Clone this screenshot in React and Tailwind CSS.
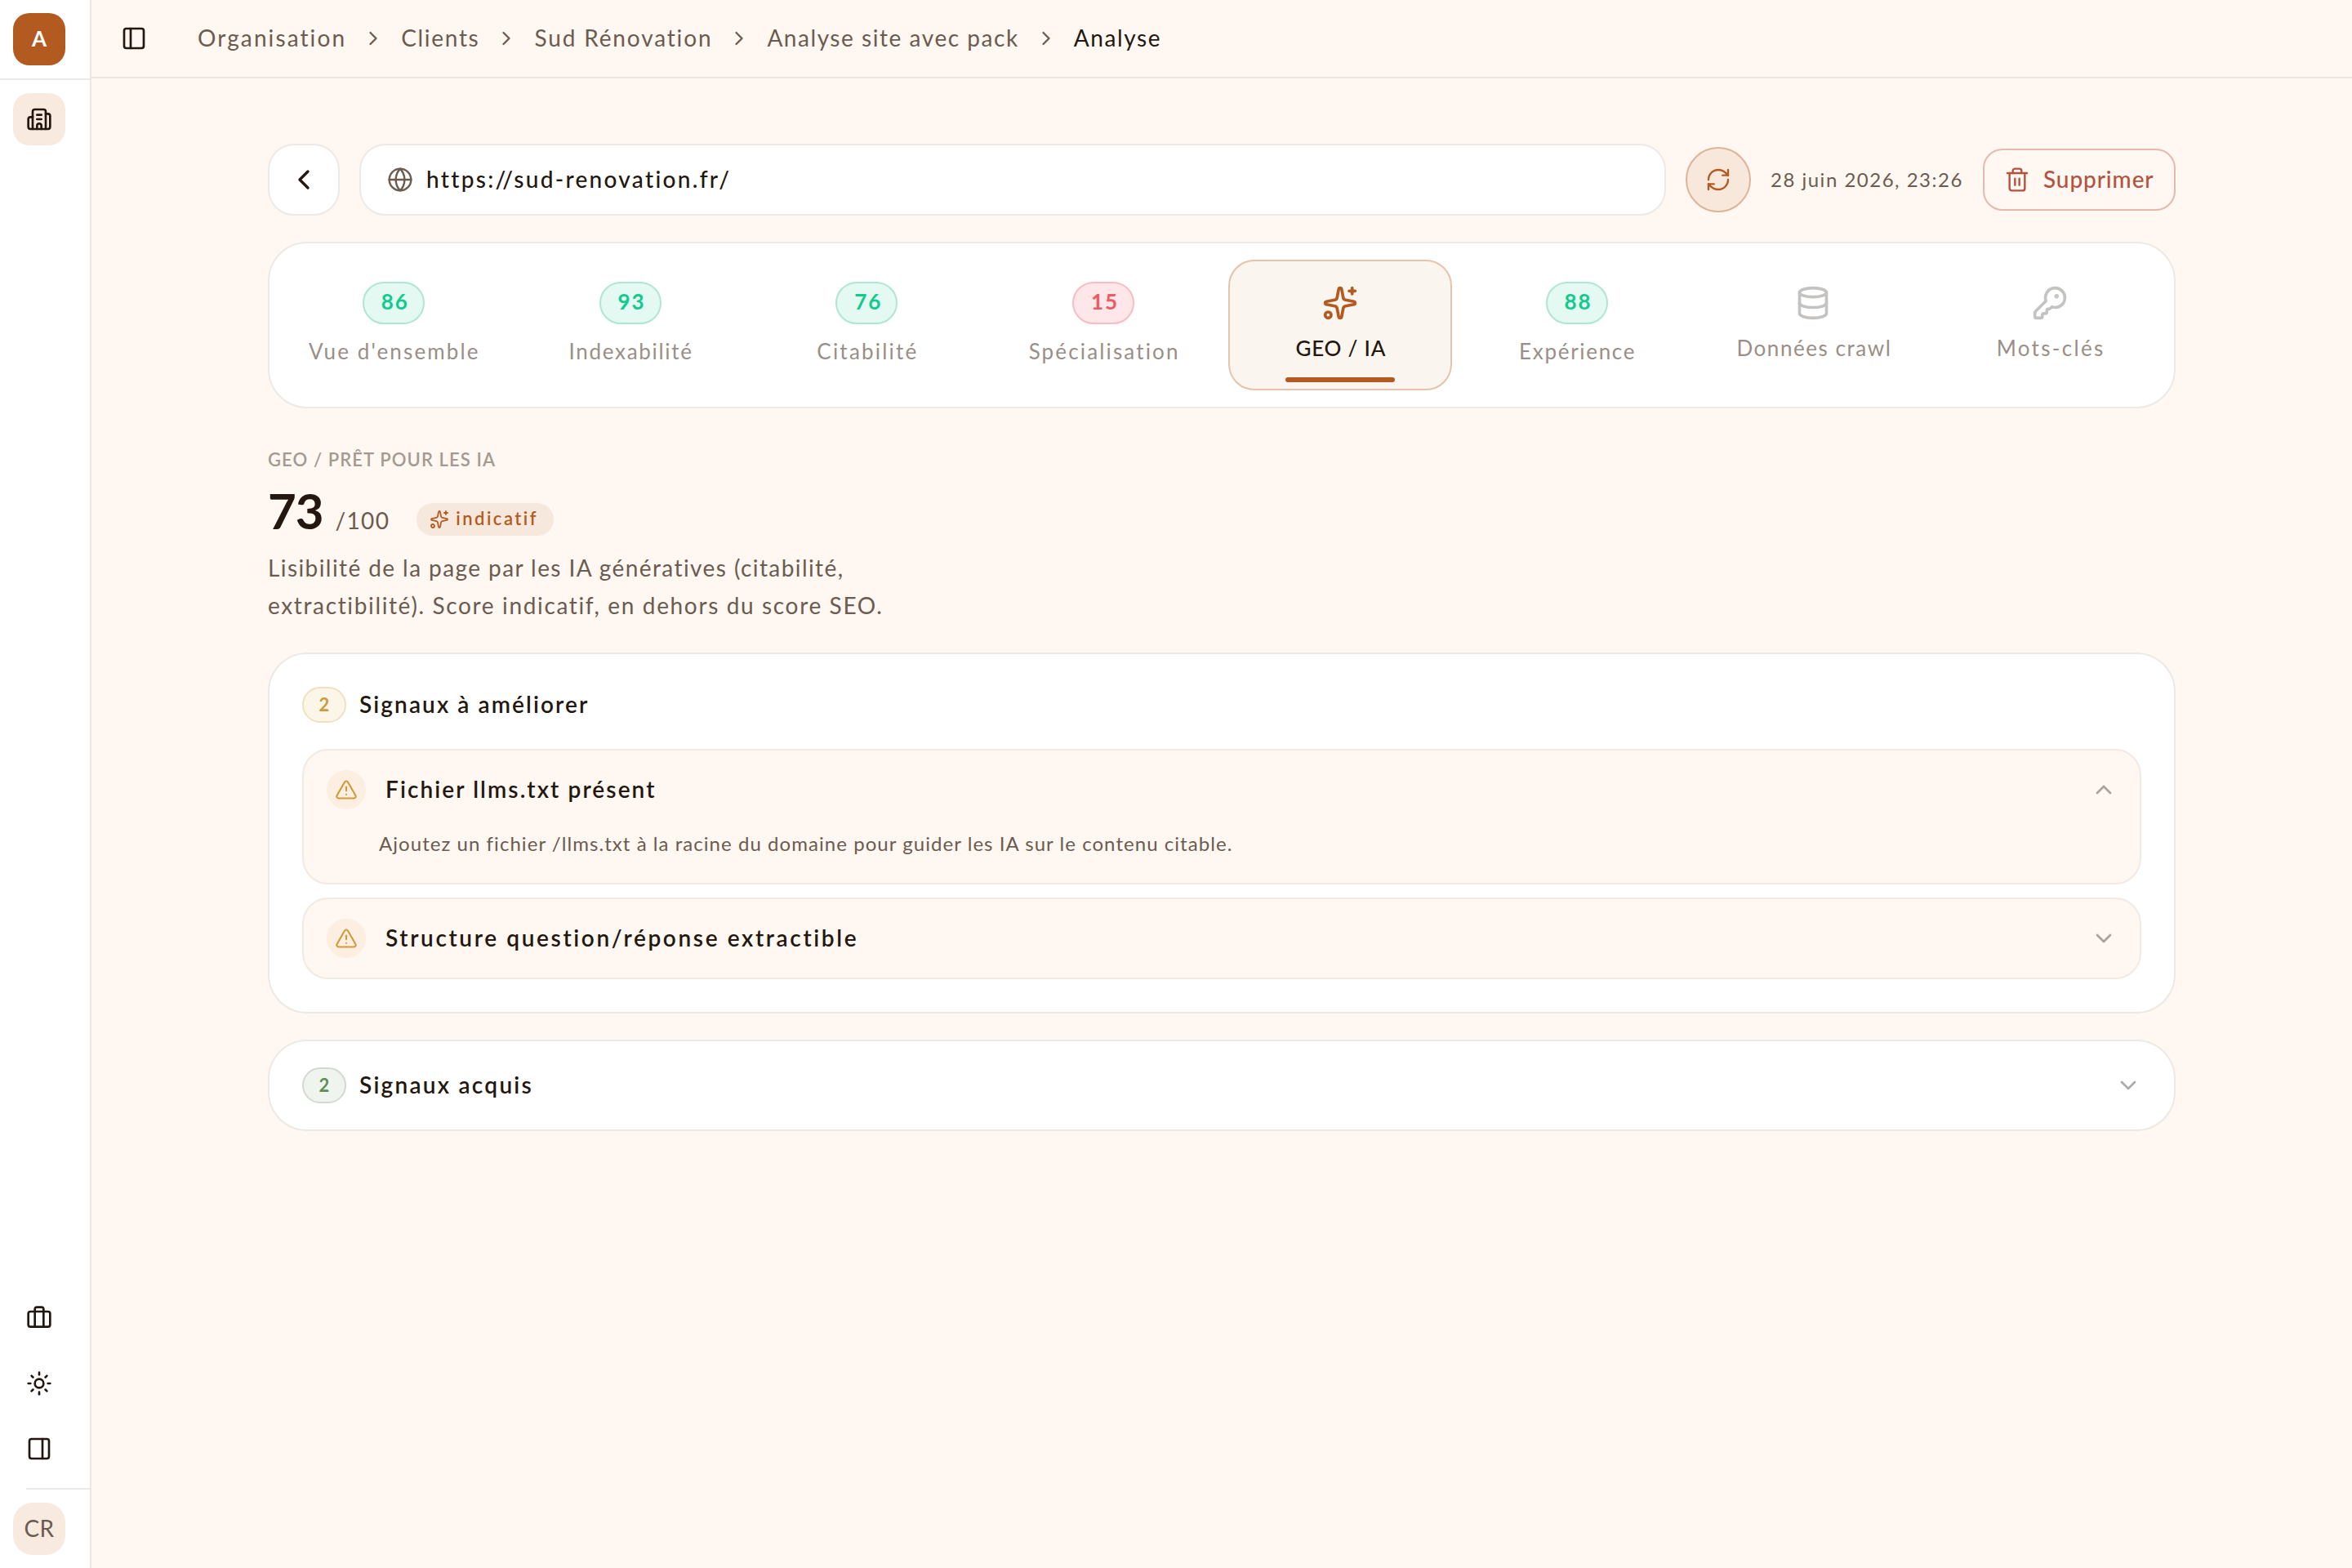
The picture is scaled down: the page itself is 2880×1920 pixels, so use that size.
import React from 'react'
import {
  AlertTriangle,
  Briefcase,
  Building2,
  ChevronDown,
  ChevronLeft,
  ChevronRight,
  ChevronUp,
  Database,
  Globe,
  KeyRound,
  PanelLeft,
  PanelRight,
  RefreshCw,
  Sparkles,
  Sun,
  Trash2,
} from 'lucide-react'

const crumbs = [
  { label: 'Organisation', cls: 'tracking-[2.1px]' },
  { label: 'Clients', cls: 'tracking-[1.7px]' },
  { label: 'Sud Rénovation', cls: 'tracking-[1.85px]' },
  { label: 'Analyse site avec pack', cls: 'tracking-[1.55px]' },
]

const good = 'bg-[#e3f9f1] border-[#b0e6d3] text-[#12c98e]'
const bad = 'bg-[#ffe6e9] border-[#f9bcc5] text-[#ee5a63]'

const tabs = [
  { label: "Vue d'ensemble", score: 86, tone: good, cls: 'tracking-[2.15px]' },
  { label: 'Indexabilité', score: 93, tone: good, cls: 'tracking-[1.7px]' },
  { label: 'Citabilité', score: 76, tone: good, cls: 'tracking-[2.2px]' },
  { label: 'Spécialisation', score: 15, tone: bad, cls: 'tracking-[2.15px]' },
  { label: 'GEO / IA', icon: Sparkles, active: true, cls: 'tracking-[0.8px]' },
  { label: 'Expérience', score: 88, tone: good, cls: 'tracking-[1.7px]' },
  { label: 'Données crawl', icon: Database, cls: 'tracking-[1.55px]' },
  { label: 'Mots-clés', icon: KeyRound, cls: 'tracking-[2.3px]' },
]

const Sidebar = () => (
  <aside className="w-[112px] shrink-0 flex flex-col bg-white border-r-2 border-[#eee7e1]">
    <div className="h-[98px] shrink-0 pl-4 flex items-center border-b-2 border-[#ebe9e7]">
      <div className="size-16 rounded-[20px] bg-[#b35a20] text-white text-[26px] font-bold flex items-center justify-center pb-[2px]">A</div>
    </div>
    <div className="pl-4 pt-4">
      <button className="size-16 rounded-[20px] bg-[#f9eadf] text-[#231710] flex items-center justify-center">
        <Building2 size={32} />
      </button>
    </div>
    <div className="mt-auto pl-4 flex flex-col gap-4 text-[#231710]">
      <button className="size-16 flex items-center justify-center"><Briefcase size={32} /></button>
      <button className="size-16 flex items-center justify-center"><Sun size={32} /></button>
      <button className="size-16 flex items-center justify-center"><PanelRight size={32} /></button>
    </div>
    <div className="ml-8 mt-4 h-[2px] bg-[#ebe9e7]" />
    <div className="pl-4 py-4">
      <div className="size-16 rounded-[24px] bg-[#f9eadf] text-[#6b5b50] text-[28px] tracking-[0.5px] flex items-center justify-center pb-[3px]">CR</div>
    </div>
  </aside>
)

const Topbar = () => (
  <header className="h-24 shrink-0 pl-9 flex items-center border-b-2 border-[#eee5de]">
    <PanelLeft size={32} className="text-[#231710]" />
    <nav className="ml-[62px] flex items-center gap-5 text-[28px] leading-[42px] text-[#6b5b50]">
      {crumbs.map((c) => (
        <React.Fragment key={c.label}>
          <span className={`pb-[3px] -mr-[1px] ${c.cls}`}>{c.label}</span>
          <ChevronRight size={28} />
        </React.Fragment>
      ))}
      <span className="pb-[3px] text-[#231710] tracking-[1.6px]">Analyse</span>
    </nav>
  </header>
)

const Toolbar = () => (
  <div className="h-[88px] flex items-center gap-6">
    <button className="size-[88px] shrink-0 rounded-[32px] bg-white border-2 border-[#ece9e6] text-[#231710] flex items-center justify-center">
      <ChevronLeft size={40} />
    </button>
    <div className="h-[88px] w-[1600px] rounded-[32px] bg-white border-2 border-[#ece9e6] px-8 flex items-center gap-4">
      <Globe size={32} strokeWidth={1.8} className="text-[#6b5b50]" />
      <span className="pb-[3px] text-[28px] leading-[42px] font-medium text-[#231710] tracking-[2.3px]">https://sud-renovation.fr/</span>
    </div>
    <button className="size-20 shrink-0 rounded-full bg-[#f8e8dc] border-2 border-[#dcb497] text-[#b35a20] flex items-center justify-center">
      <RefreshCw size={32} strokeWidth={1.8} />
    </button>
    <span className="w-[236px] pb-[1px] whitespace-nowrap text-[24px] leading-9 text-[#6b5b50] tracking-[1.5px]">28 juin 2026, 23:26</span>
    <button className="h-[76px] w-[236px] rounded-[24px] border-2 border-[#e3b9b0] text-[#b2533f] pl-6 flex items-center gap-4">
      <Trash2 size={32} strokeWidth={1.8} />
      <span className="pb-[3px] text-[28px] leading-[42px] font-medium tracking-[0.9px]">Supprimer</span>
    </button>
  </div>
)

const Tab = ({ tab }) => {
  const Icon = tab.icon
  return (
    <div
      className={`relative h-[160px] flex flex-col items-center justify-center gap-4 rounded-[32px] border-2 ${
        tab.active ? 'bg-[#faf5ee] border-[#e3c4ad]' : 'border-transparent'
      }`}
    >
      {Icon ? (
        <Icon size={44} className={tab.active ? 'text-[#b35a20]' : 'text-[#c5c3c1]'} />
      ) : (
        <span className={`w-[76px] h-[52px] rounded-[26px] border-2 text-[26px] font-bold tracking-[2px] pl-[4px] pb-[2px] flex items-center justify-center ${tab.tone}`}>
          {tab.score}
        </span>
      )}
      <span className={`-mt-[2px] pb-[2px] pl-[2px] text-[26px] leading-[39px] whitespace-nowrap ${tab.cls} ${tab.active ? 'font-medium text-[#231710]' : 'text-[#998f88]'}`}>
        {tab.label}
      </span>
      {tab.active && <span className="absolute bottom-2 left-1/2 -translate-x-1/2 w-[134px] h-[6px] rounded-full bg-[#b35a20]" />}
    </div>
  )
}

const Count = ({ children, tone }) => (
  <span className={`w-[54px] h-11 rounded-full border-2 text-[22px] font-bold pb-[1px] flex items-center justify-center ${tone}`}>{children}</span>
)

const Signal = ({ title, cls, open, children }) => (
  <div className="rounded-[32px] border-2 border-[#f1eae4] bg-[#fff7f1]">
    <div className="h-24 px-7 flex items-center">
      <span className="size-12 rounded-full bg-[#fceee0] text-[#d09a3a] flex items-center justify-center">
        <AlertTriangle size={28} strokeWidth={1.8} />
      </span>
      <span className={`ml-6 pb-[3px] text-[28px] leading-[42px] font-semibold text-[#231710] ${cls}`}>{title}</span>
      {open ? (
        <ChevronUp size={32} className="ml-auto text-[#aba29b]" />
      ) : (
        <ChevronDown size={32} className="ml-auto text-[#aba29b]" />
      )}
    </div>
    {open && <p className="-mt-[1px] pl-[92px] pr-7 pb-[29px] text-[24px] leading-[38px] text-[#6b5b50] tracking-[1.05px]">{children}</p>}
  </div>
)

export default function App() {
  return (
    <div className="h-[1920px] w-[2880px] flex bg-[#fff7f1] font-[Lato,sans-serif] overflow-hidden">
      <Sidebar />
      <div className="flex-1 flex flex-col">
        <Topbar />
        <main className="w-[2336px] mx-auto pt-20">
          <Toolbar />

          <div className="mt-8 rounded-[48px] bg-white border-2 border-[#ece9e6] px-[15px] py-5 grid grid-cols-8 gap-4">
            {tabs.map((tab) => <Tab key={tab.label} tab={tab} />)}
          </div>

          <section className="mt-[46px]">
            <div className="text-[22px] leading-[33px] font-semibold text-[#a39a92] tracking-[1.1px]">GEO / PRÊT POUR LES IA</div>
            <div className="mt-[13px] h-[66px] flex items-baseline">
              <span className="text-[60px] leading-[66px] font-bold text-[#231710] tracking-[-1px]">73</span>
              <span className="ml-[15px] text-[28px] text-[#6b5b50] tracking-[1.3px]">/100</span>
              <span className="ml-[33px] mt-6 self-start h-10 w-[168px] rounded-full bg-[#f7e8dd] text-[#b35a20] pl-4 flex items-center gap-2">
                <Sparkles size={24} strokeWidth={1.8} />
                <span className="pb-[2px] text-[22px] leading-8 font-semibold tracking-[2.5px]">indicatif</span>
              </span>
            </div>
            <p className="mt-[14px] text-[28px] leading-[46px] text-[#6b5b50]">
              <span className="block tracking-[1.42px]">Lisibilité de la page par les IA génératives (citabilité,</span>
              <span className="block tracking-[1.64px]">extractibilité). Score indicatif, en dehors du score SEO.</span>
            </p>
          </section>

          <section className="mt-[35px] rounded-[48px] bg-white border-2 border-[#ece9e6] p-10">
            <div className="h-11 flex items-center gap-4">
              <Count tone="bg-[#fcf6e9] border-[#f0e1c0] text-[#cf9a3c]">2</Count>
              <h2 className="pb-[3px] text-[28px] leading-[42px] font-semibold text-[#231710] tracking-[2.1px]">Signaux à améliorer</h2>
            </div>
            <div className="mt-8 flex flex-col gap-4">
              <Signal title="Fichier llms.txt présent" cls="tracking-[2.1px]" open>
                Ajoutez un fichier /llms.txt à la racine du domaine pour guider les IA sur le contenu citable.
              </Signal>
              <Signal title="Structure question/réponse extractible" cls="tracking-[2.63px]" />
            </div>
          </section>

          <section className="mt-8 rounded-[48px] bg-white border-2 border-[#ece9e6] px-10 py-8">
            <div className="h-11 flex items-center gap-4">
              <Count tone="bg-[#f0f4ee] border-[#d2dad0] text-[#5f8f56]">2</Count>
              <h2 className="pb-[3px] text-[28px] leading-[42px] font-semibold text-[#231710] tracking-[2.25px]">Signaux acquis</h2>
              <ChevronDown size={32} className="ml-auto text-[#aeaaa7]" />
            </div>
          </section>
        </main>
      </div>
    </div>
  )
}
